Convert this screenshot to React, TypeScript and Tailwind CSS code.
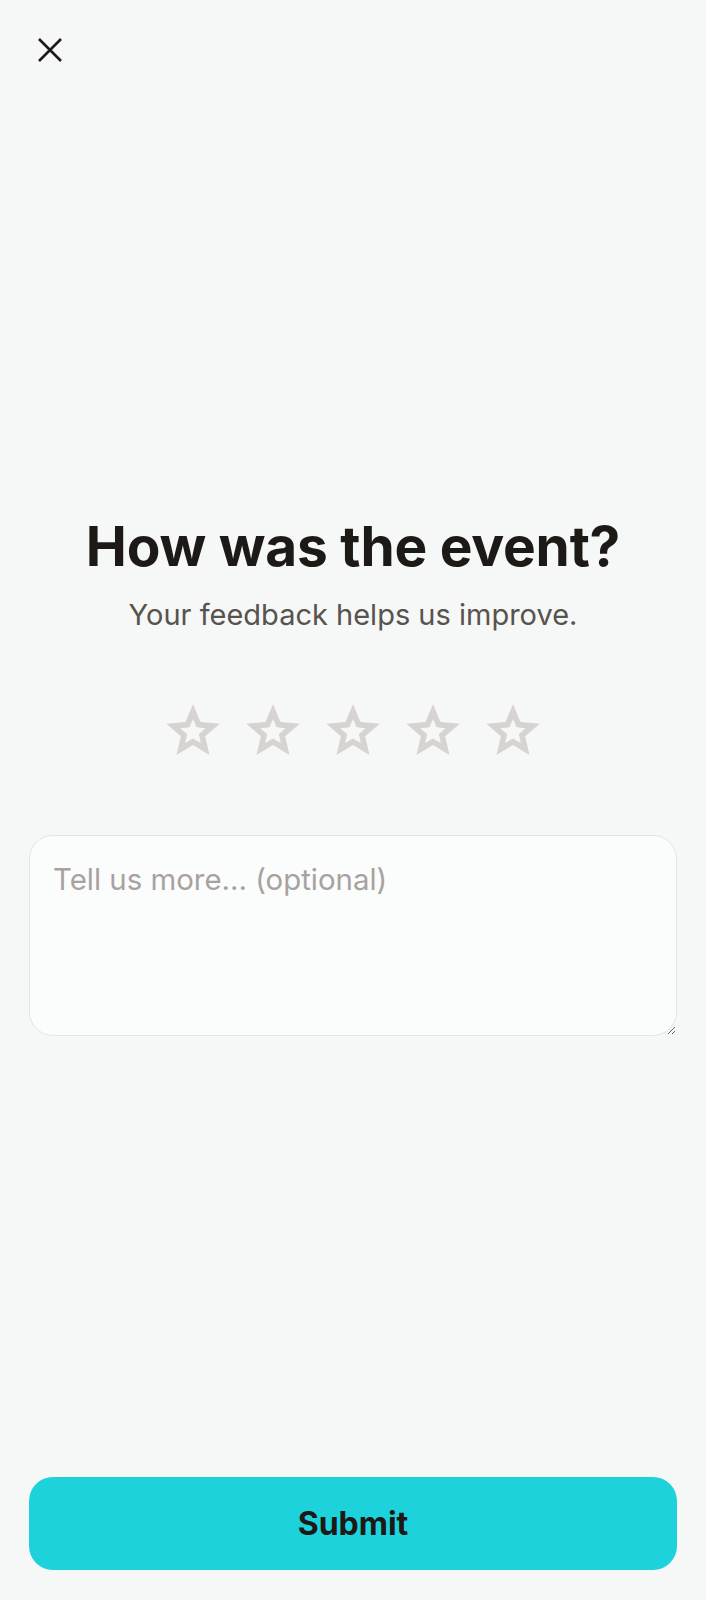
import React, { useState } from "react";

// outer star plus a smaller inner star cut out with evenodd, so the outline reads thick
const STAR =
  "M12 2L14.81 8.63L22 9.24L16.55 13.97L18.18 21L12 17.27L5.82 21L7.45 13.97L2 9.24L9.19 8.63Z" +
  "M12 7.46L10.65 10.64L7.2 10.94L9.82 13.21L9.03 16.58L12 14.79L14.97 16.58L14.18 13.21L16.8 10.94L13.35 10.64Z";

function StarOutline({ active }: { active: boolean }) {
  return (
    <svg width="64" height="64" viewBox="0 0 24 24" className={active ? "text-amber-400" : "text-[#d6d3d1]"}>
      <path fill="currentColor" fillRule="evenodd" d={STAR} />
    </svg>
  );
}

export default function App() {
  const [rating, setRating] = useState(0);
  const [comment, setComment] = useState("");

  return (
    <div
      className="min-h-[1600px] flex flex-col bg-[#f6f7f7]"
      style={{ fontFamily: "Inter, 'Noto Sans', sans-serif" }}
    >
      {/* close */}
      <div className="pt-[38px] pl-[38px]">
        <button aria-label="Close" className="block w-6 h-6 text-[#1c1917]">
          <svg width="24" height="24" viewBox="0 0 24 24">
            <path d="M1 1L23 23M23 1L1 23" stroke="currentColor" strokeWidth="2.6" />
          </svg>
        </button>
      </div>

      <h1 className="mt-[451px] text-center text-[55px] leading-[66px] font-bold text-[#1c1917] tracking-[-0.004em]">
        How was the event?
      </h1>
      <p className="mt-[16px] text-center text-[29px] leading-[40px] text-[#57534e]">
        Your feedback helps us improve.
      </p>

      <div className="mt-[64px] flex justify-center gap-4">
        {[1, 2, 3, 4, 5].map((n) => (
          <button key={n} aria-label={`${n} stars`} onClick={() => setRating(n)} className="block">
            <StarOutline active={n <= rating} />
          </button>
        ))}
      </div>

      <div className="mt-[72px] mx-[29px]">
        <textarea
          value={comment}
          onChange={(e) => setComment(e.target.value)}
          placeholder="Tell us more... (optional)"
          className="block w-full h-[201px] rounded-3xl border border-[#e7e5e4] bg-[#fbfcfc] pt-[22px] px-[23px] text-[29.4px] leading-[44px] text-[#1c1917] placeholder:text-[#a8a29e] outline-none"
        />
      </div>

      <div className="mt-auto mx-[29px] mb-[30px]">
        <button className="w-full h-[93px] rounded-3xl bg-[#1ed2dc] text-[32px] font-bold text-[#1c1917]">
          Submit
        </button>
      </div>
    </div>
  );
}
